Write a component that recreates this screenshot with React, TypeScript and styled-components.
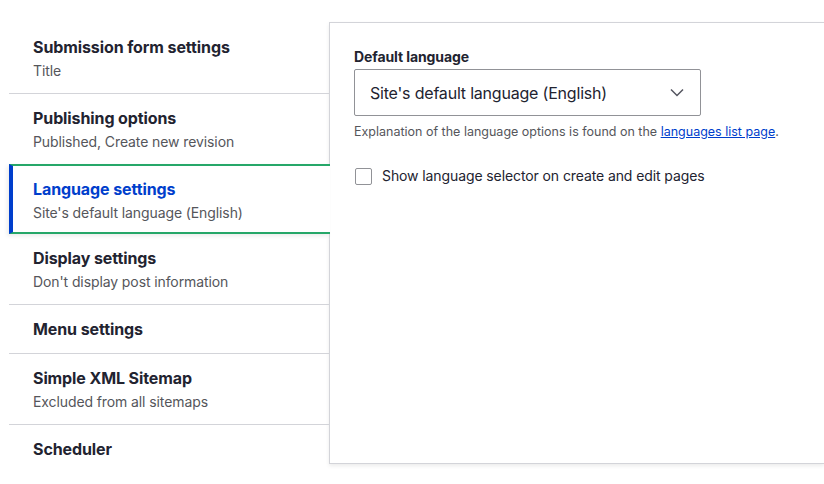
import React, { useState } from 'react';
import styled, { createGlobalStyle } from 'styled-components';

const GlobalStyle = createGlobalStyle`
    body {
        margin: 0;
        background: #ffffff;
        font-family: Inter, "Noto Sans", "Liberation Sans", sans-serif;
        color: #222330;
    }
`;

const Layout = styled.div`
    display: flex;
    align-items: flex-start;
    padding: 22px 0 0 9px;
    width: 824px;
    height: 484px;
    box-sizing: border-box;
    overflow: hidden;
`;

const TabList = styled.ul`
    list-style: none;
    margin: 0;
    padding: 1px 0 0;
    width: 320px;
    flex-shrink: 0;
`;

const Tab = styled.li<{ $active?: boolean; $last?: boolean }>`
    position: relative;
    padding: 12px 24px;
    border-bottom: 1px solid ${(p) => (p.$last ? 'transparent' : '#d3d4d9')};
    cursor: pointer;

    ${(p) =>
        p.$active &&
        `
        z-index: 1;
        margin-top: -1px;
        margin-right: -1px;
        padding: 11px 24px 9px 20px;
        background: #ffffff;
        border-top: 2px solid #26a769;
        border-bottom: 2px solid #26a769;
        border-left: 4px solid #003ecc;
        box-shadow: -2px 2px 4px rgba(0, 0, 0, 0.08);
    `}
`;

const TabTitle = styled.div<{ $active?: boolean }>`
    font-size: 16px;
    font-weight: 700;
    line-height: 24px;
    letter-spacing: -0.1px;
    color: ${(p) => (p.$active ? '#003ecc' : '#222330')};
`;

const TabSummary = styled.div`
    margin-top: 2px;
    font-size: 14px;
    line-height: 20px;
    color: #55565b;
    letter-spacing: -0.1px;
`;

const Panel = styled.section`
    flex: 1;
    height: 442px;
    box-sizing: border-box;
    border: 1px solid #d3d4d9;
    border-right: none;
    background: #ffffff;
    box-shadow: 0 2px 4px rgba(0, 0, 0, 0.08);
    padding: 24px 24px;
`;

const Label = styled.label`
    display: block;
    font-size: 14px;
    font-weight: 700;
    line-height: 20px;
    letter-spacing: -0.1px;
    color: #222330;
    margin-bottom: 2px;
`;

const SelectBox = styled.div`
    display: flex;
    align-items: center;
    justify-content: space-between;
    width: 347px;
    height: 47px;
    box-sizing: border-box;
    border: 1px solid #919297;
    border-radius: 2px;
    padding: 0 16px 0 15px;
    font-size: 16px;
    letter-spacing: -0.2px;
    color: #222330;
    cursor: pointer;
`;

const Description = styled.div`
    margin-top: 7px;
    font-size: 12.5px;
    line-height: 18px;
    color: #55565b;
`;

const Link = styled.a`
    color: #003ecc;
    text-decoration: underline;
`;

const CheckRow = styled.label`
    display: flex;
    align-items: center;
    gap: 10px;
    margin-top: 25px;
    font-size: 14px;
    line-height: 20px;
    letter-spacing: -0.1px;
    color: #222330;
    cursor: pointer;
`;

const Box = styled.span<{ $checked: boolean }>`
    width: 17px;
    height: 17px;
    box-sizing: border-box;
    border: 1px solid #919297;
    border-radius: 2px;
    margin-left: 1px;
    background: ${(p) => (p.$checked ? '#003ecc' : '#ffffff')};
`;

const tabs = [
    { title: 'Submission form settings', summary: 'Title' },
    { title: 'Publishing options', summary: 'Published, Create new revision' },
    { title: 'Language settings', summary: "Site's default language (English)" },
    { title: 'Display settings', summary: "Don't display post information" },
    { title: 'Menu settings' },
    { title: 'Simple XML Sitemap', summary: 'Excluded from all sitemaps' },
    { title: 'Scheduler' },
];

const Chevron = () => (
    <svg width="14" height="9" viewBox="0 0 14 9" fill="none">
        <polyline points="1,1.5 7,7.5 13,1.5" stroke="#545560" strokeWidth="1.5" />
    </svg>
);

export default function App() {
    const [active, setActive] = useState(2);
    const [checked, setChecked] = useState(false);

    return (
        <>
            <GlobalStyle />
            <Layout>
                <TabList>
                    {tabs.map((tab, i) => (
                        <Tab key={tab.title} $active={i === active} $last={i === tabs.length - 1} onClick={() => setActive(i)}>
                            <TabTitle $active={i === active}>{tab.title}</TabTitle>
                            {tab.summary && <TabSummary>{tab.summary}</TabSummary>}
                        </Tab>
                    ))}
                </TabList>
                <Panel>
                    <Label>Default language</Label>
                    <SelectBox>
                        <span>Site's default language (English)</span>
                        <Chevron />
                    </SelectBox>
                    <Description>
                        Explanation of the language options is found on the <Link href="#">languages list page</Link>.
                    </Description>
                    <CheckRow onClick={() => setChecked(!checked)}>
                        <Box $checked={checked} />
                        Show language selector on create and edit pages
                    </CheckRow>
                </Panel>
            </Layout>
        </>
    );
}
